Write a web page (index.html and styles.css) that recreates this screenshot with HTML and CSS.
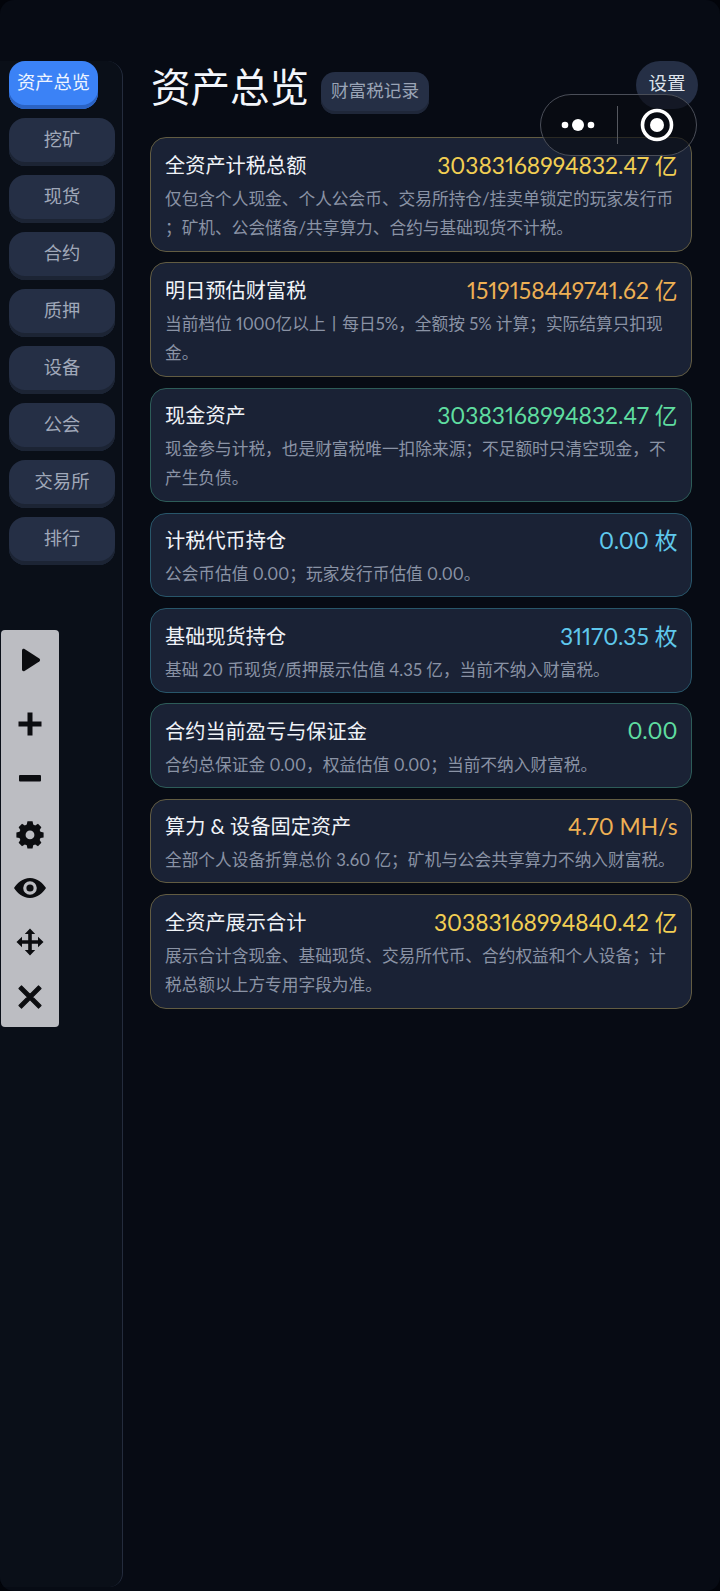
FILE: index.html
```html
<!DOCTYPE html>
<html lang="zh">
<head>
<meta charset="utf-8">
<title>资产总览</title>
<link rel="stylesheet" href="styles.css">
</head>
<body>
<div class="page">
  <nav class="side">
    <div class="nav active">资产总览</div>
    <div class="nav">挖矿</div>
    <div class="nav">现货</div>
    <div class="nav">合约</div>
    <div class="nav">质押</div>
    <div class="nav">设备</div>
    <div class="nav">公会</div>
    <div class="nav">交易所</div>
    <div class="nav">排行</div>
  </nav>
  <main class="main">
    <header class="head">
      <h1 class="title">资产总览</h1>
      <div class="record">财富税记录</div>
      <div class="settings">设置</div>
    </header>
    <section class="cards">
      <article class="card tall gold">
        <div class="row"><span class="name">全资产计税总额</span><span class="val yellow">30383168994832.47 亿</span></div>
        <p class="desc">仅包含个人现金、个人公会币、交易所持仓/挂卖单锁定的玩家发行币；矿机、公会储备/共享算力、合约与基础现货不计税。</p>
      </article>
      <article class="card tall gold">
        <div class="row"><span class="name">明日预估财富税</span><span class="val orange">1519158449741.62 亿</span></div>
        <p class="desc">当前档位 1000亿以上丨每日5%，全额按 5% 计算；实际结算只扣现金。</p>
      </article>
      <article class="card tall teal">
        <div class="row"><span class="name">现金资产</span><span class="val green">30383168994832.47 亿</span></div>
        <p class="desc">现金参与计税，也是财富税唯一扣除来源；不足额时只清空现金，不产生负债。</p>
      </article>
      <article class="card blue">
        <div class="row"><span class="name">计税代币持仓</span><span class="val cyan">0.00 枚</span></div>
        <p class="desc">公会币估值 0.00；玩家发行币估值 0.00。</p>
      </article>
      <article class="card blue">
        <div class="row"><span class="name">基础现货持仓</span><span class="val cyan">31170.35 枚</span></div>
        <p class="desc">基础 20 币现货/质押展示估值 4.35 亿，当前不纳入财富税。</p>
      </article>
      <article class="card teal">
        <div class="row"><span class="name">合约当前盈亏与保证金</span><span class="val green">0.00</span></div>
        <p class="desc">合约总保证金 0.00，权益估值 0.00；当前不纳入财富税。</p>
      </article>
      <article class="card gold">
        <div class="row"><span class="name">算力 &amp; 设备固定资产</span><span class="val orange">4.70 MH/s</span></div>
        <p class="desc">全部个人设备折算总价 3.60 亿；矿机与公会共享算力不纳入财富税。</p>
      </article>
      <article class="card tall gold">
        <div class="row"><span class="name">全资产展示合计</span><span class="val yellow">30383168994840.42 亿</span></div>
        <p class="desc">展示合计含现金、基础现货、交易所代币、合约权益和个人设备；计税总额以上方专用字段为准。</p>
      </article>
    </section>
  </main>
  <div class="capsule">
    <svg class="dots" width="34" height="14" viewBox="0 0 34 14"><circle cx="4" cy="7" r="3.3"/><circle cx="17" cy="7" r="6"/><circle cx="30" cy="7" r="3.3"/></svg>
    <span class="sep"></span>
    <svg class="target" width="34" height="34" viewBox="0 0 34 34"><circle cx="17" cy="17" r="14.5" fill="none" stroke="#fff" stroke-width="3.6"/><circle cx="17" cy="17" r="7"/></svg>
  </div>
  <div class="tools">
    <svg class="tool tool-play" viewBox="0 0 32 32"><path d="M8 6.500c0-1.400 1.400-2.100 2.500-1.400l14.800 9.500c1 .7 1 2.100 0 2.800L10.500 26.900c-1.100.7-2.500 0-2.500-1.400z"/></svg>
    <svg class="tool" viewBox="0 0 32 32"><path d="M13.500 4.500h5v9h9v5h-9v9h-5v-9h-9v-5h9z"/></svg>
    <svg class="tool" viewBox="0 0 32 32"><rect x="5" y="13" width="22" height="6.500" rx="1"/></svg>
    <svg class="tool" viewBox="0 0 32 32"><path fill-rule="evenodd" d="M13 3h6l.8 3.800 2.300 1 3.300-2.100 4 4.100-2 3.300.9 2.200 3.700.8v5.800l-3.700.8-.9 2.200 2 3.300-4 4.100-3.300-2.100-2.300 1L19 35h-6l-.8-3.800-2.300-1-3.300 2.100-4-4.100 2-3.300-.9-2.200L0 21.900v-5.800l3.700-.8.900-2.200-2-3.300 4-4.100 3.300 2.100 2.300-1zM16 13.800a5.200 5.200 0 1 0 0 10.400 5.200 5.200 0 0 0 0-10.400z" transform="translate(2.400 1.800) scale(.85)"/></svg>
    <svg class="tool" viewBox="0 0 32 32"><path fill-rule="evenodd" d="M16 6C8.500 6 3 11.500 0 16c3 4.500 8.500 10 16 10s13-5.500 16-10c-3-4.500-8.500-10-16-10zm0 3.200a6.800 6.800 0 1 1 0 13.600 6.800 6.800 0 0 1 0-13.600z"/><circle cx="16" cy="16" r="3.600"/></svg>
    <svg class="tool" viewBox="0 0 32 32"><path d="M16 2.500l5.200 5.500h-3.400v6.200H24v-3.400l5.500 5.200-5.500 5.200v-3.400h-6.200V24h3.400L16 29.500 10.800 24h3.400v-6.200H8v3.400L2.500 16 8 10.800v3.400h6.200V8h-3.400z"/></svg>
    <svg class="tool" viewBox="0 0 32 32"><path d="M7.500 5l8.500 8.500L24.500 5l2.500 2.500-8.500 8.500 8.500 8.500-2.500 2.500-8.500-8.500L7.500 27 5 24.500l8.500-8.500L5 7.500z" stroke="#0c0d10" stroke-width="1.200" stroke-linejoin="round"/></svg>
  </div>
</div>
</body>
</html>
```
FILE: styles.css
```css
* { box-sizing: border-box; }
html, body { margin: 0; padding: 0; }
body {
  background: #02040a;
  font-family: "Lato", "Noto Sans CJK SC", sans-serif;
  font-variant-numeric: proportional-nums;
  color: #fff;
}
.page {
  position: relative;
  display: flex;
  height: 1591px;
  padding: 61px 28px 4px 0;
  overflow: hidden;
  background: #070b14;
  border-radius: 14px;
}
.side {
  flex: 0 0 123px;
  display: flex;
  flex-direction: column;
  align-items: flex-start;
  gap: 9px;
  padding-left: 9px;
  background: #0a0f18;
  border-right: 1px solid #242c3d;
  border-radius: 0 16px 14px 0;
}
.nav {
  width: 106px;
  height: 48px;
  border-radius: 16px;
  background: #252f45;
  box-shadow: inset 0 -4px 0 #1c2434;
  color: #a0a8b9;
  font-size: 18.300px;
  line-height: 43px;
  text-align: center;
}
.nav.active {
  width: 89px;
  background: #3b82f6;
  box-shadow: inset 0 -4px 0 #2b63c4;
  color: #eef4ff;
}
.main {
  flex: 1;
  min-width: 0;
  padding-left: 27px;
}
.head {
  display: flex;
  align-items: center;
  height: 76px;
  position: relative;
}
.title {
  margin: 0 12px 0 1px;
  font-size: 39.500px;
  font-weight: 400;
  line-height: 54px;
  color: #f3f6fb;
  position: relative;
  top: -12px;
}
.record {
  height: 42px;
  padding: 0 10px;
  margin-top: -13px;
  border-radius: 14px;
  background: #252f45;
  box-shadow: inset 0 -3px 0 #1f2739;
  color: #9aa4b6;
  font-size: 17.600px;
  line-height: 38px;
}
.settings {
  position: absolute;
  right: -6px;
  top: 0;
  width: 62px;
  height: 48px;
  border-radius: 24px;
  background: #252f45;
  color: #dfe4ec;
  font-size: 18.500px;
  line-height: 44px;
  text-align: center;
}
.cards {
  display: flex;
  flex-direction: column;
  gap: 10.800px;
}
.card {
  border-radius: 16px;
  background: #1a2235;
  border: 1px solid #39465a;
  padding: 10px 13.500px 7px 14px;
}
.card.tall { padding-bottom: 8px; }
.card.gold { border-color: #625c42; }
.card.teal { border-color: #2d5c58; }
.card.blue { border-color: #28566a; }
.row {
  display: flex;
  justify-content: space-between;
  align-items: center;
  height: 32px;
}
.name {
  font-size: 20.200px;
  color: #f0f3f8;
}
.val {
  font-size: 22.800px;
  white-space: nowrap;
}
.yellow { color: #f2cf53; }
.orange { color: #eeb054; }
.green { color: #5fdda0; }
.cyan { color: #5fc8ec; }
.desc {
  margin: 4.500px 0 0;
  font-size: 16.700px;
  line-height: 29px;
  color: #8a93a5;
  line-break: anywhere;
}
.capsule {
  position: absolute;
  left: 540px;
  top: 94px;
  width: 157px;
  height: 62px;
  display: flex;
  align-items: center;
  border-radius: 31px;
  border: 1.500px solid #4a4e58;
  background: rgba(10, 12, 18, .62);
  padding-left: 20px;
}
.dots { fill: #fff; margin-right: 22px; }
.sep {
  width: 1px;
  height: 38px;
  background: #55585f;
  margin-right: 22px;
}
.target { fill: #fff; }
.tools {
  position: absolute;
  left: 1px;
  top: 630px;
  width: 58px;
  height: 397px;
  padding-top: 14px;
  display: flex;
  flex-direction: column;
  align-items: center;
  gap: 22.700px;
  background: #bcbdc2;
  border-radius: 4px;
}
.tool {
  flex: none;
  width: 32px;
  height: 32px;
  fill: #0c0d10;
}
.tool-play { margin-bottom: 9px; }
```
